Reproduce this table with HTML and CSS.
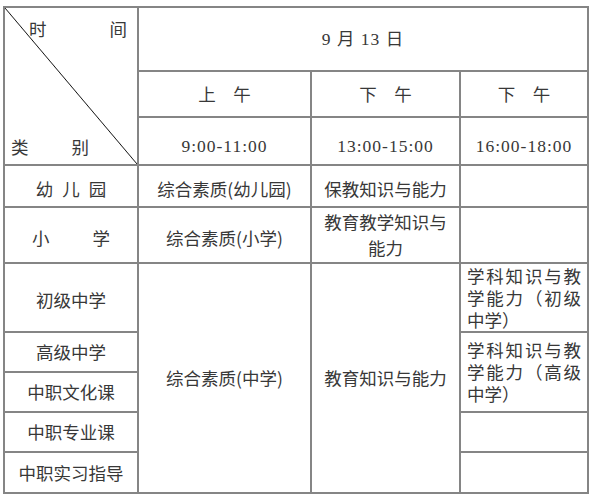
FILE: index.html
```html
<!DOCTYPE html>
<html lang="zh-CN">
<head>
<meta charset="utf-8">
<title>考试时间安排</title>
<link rel="stylesheet" href="styles.css">
</head>
<body>
<table class="schedule">
  <colgroup>
    <col class="c1"><col class="c2"><col class="c3"><col class="c4">
  </colgroup>
  <tr class="r-date">
    <td rowspan="3" class="diag">
      <div class="diag-inner">
        <div class="diag-top"><span>时</span><span>间</span></div>
        <div class="diag-bottom"><span>类</span><span>别</span></div>
      </div>
    </td>
    <td colspan="3" class="num">9 月 13 日</td>
  </tr>
  <tr class="r-half">
    <td>上　午</td>
    <td>下　午</td>
    <td>下　午</td>
  </tr>
  <tr class="r-time">
    <td class="num time">9:00-11:00</td>
    <td class="num time">13:00-15:00</td>
    <td class="num time">16:00-18:00</td>
  </tr>
  <tr class="r-kg">
    <td class="low"><span class="sp1"><span>幼</span><span>儿</span><span>园</span></span></td>
    <td class="low">综合素质(幼儿园)</td>
    <td class="low">保教知识与能力</td>
    <td></td>
  </tr>
  <tr class="r-pri">
    <td class="low"><span class="sp2"><span>小</span><span>学</span></span></td>
    <td class="low">综合素质(小学)</td>
    <td class="tall">教育教学知识与能力</td>
    <td></td>
  </tr>
  <tr class="r-jun">
    <td class="low">初级中学</td>
    <td rowspan="5">综合素质(中学)</td>
    <td rowspan="5">教育知识与能力</td>
    <td class="subj">学科知识与教学能力（初级中学）</td>
  </tr>
  <tr class="r-row">
    <td>高级中学</td>
    <td rowspan="2" class="subj">学科知识与教学能力（高级中学）</td>
  </tr>
  <tr class="r-row">
    <td>中职文化课</td>
  </tr>
  <tr class="r-row">
    <td>中职专业课</td>
    <td></td>
  </tr>
  <tr class="r-last">
    <td>中职实习指导</td>
    <td></td>
  </tr>
</table>
</body>
</html>
```

FILE: styles.css
```css
html, body {
  margin: 0;
  padding: 0;
  background: #ffffff;
}

body {
  font-family: "Noto Sans CJK SC", "Liberation Serif", sans-serif;
  font-size: 17.5px;
  color: #383838;
}

.schedule {
  margin: 6px 0 0 3px;
  border-collapse: collapse;
  table-layout: fixed;
  width: 584px;
}

.c1 { width: 134px; }
.c2 { width: 173px; }
.c3 { width: 149px; }
.c4 { width: 128px; }

.schedule td {
  border: 2px solid #858585;
  padding: 0 6px;
  text-align: center;
  vertical-align: middle;
  line-height: 22px;
  overflow: hidden;
}

.r-date { height: 64px; }
.r-half { height: 46px; }
.r-time { height: 48px; }
.r-kg { height: 42px; }
.r-pri { height: 56px; }
.r-jun { height: 69px; }
.r-row { height: 40px; }
.r-last { height: 41px; }

.num {
  font-family: "Liberation Serif", "Noto Sans CJK SC", serif;
  letter-spacing: 1px;
}

.schedule td.time {
  padding-top: 9px;
}

.schedule td.low {
  padding-top: 5px;
}

.schedule td.diag {
  padding: 0;
  vertical-align: top;
  background: linear-gradient(to top right,
    transparent calc(50% - 0.8px),
    #1a1a1a 50%,
    transparent calc(50% + 0.8px));
}

.diag-inner {
  height: 156px;
  box-sizing: border-box;
  display: flex;
  flex-direction: column;
  justify-content: space-between;
  padding: 10px 0 6px 0;
}

.diag-top {
  display: flex;
  justify-content: space-between;
  padding: 0 10px 0 24px;
}

.diag-bottom {
  display: flex;
  gap: 43px;
  padding-left: 6px;
}

.sp1 {
  display: inline-flex;
  gap: 9px;
}

.sp2 {
  display: inline-flex;
  gap: 43px;
}

.schedule td.tall {
  line-height: 26px;
}

.schedule td.subj {
  text-align: justify;
  line-height: 22px;
  padding: 0 6px;
}
```
